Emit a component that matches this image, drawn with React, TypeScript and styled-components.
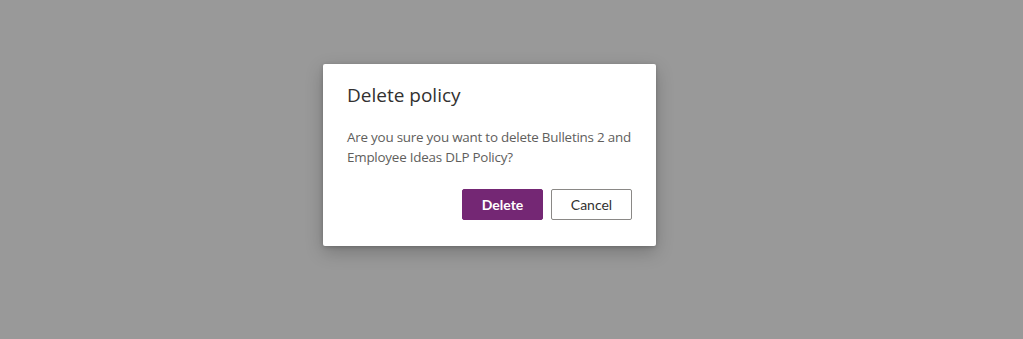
import React from "react";
import styled, { createGlobalStyle } from "styled-components";

const GlobalStyle = createGlobalStyle`
  html, body {
    margin: 0;
    padding: 0;
    height: 100%;
  }
  body {
    background: #999999;
    font-family: "Open Sans", "Noto Sans", sans-serif;
  }
  #root {
    height: 100%;
  }
`;

const Overlay = styled.div`
  height: 339px;
  display: flex;
  justify-content: flex-start;
  align-items: flex-start;
  padding: 64px 0 0 323px;
  box-sizing: border-box;
`;

const Dialog = styled.div`
  width: 333px;
  height: 182px;
  box-sizing: border-box;
  background: #ffffff;
  border-radius: 2px;
  box-shadow: 0 6px 18px rgba(0, 0, 0, 0.22), 0 1px 4px rgba(0, 0, 0, 0.18);
  padding: 18px 24px 26px;
  display: flex;
  flex-direction: column;
`;

const Title = styled.h2`
  margin: 0;
  font-family: "Open Sans", "Noto Sans", sans-serif;
  font-size: 19px;
  font-weight: 500;
  line-height: 26px;
  color: #323130;
`;

const Message = styled.p`
  margin: 19px 0 0;
  font-size: 13.4px;
  letter-spacing: -0.22px;
  line-height: 20px;
  color: #605e5c;
  white-space: nowrap;
`;

const Actions = styled.div`
  display: flex;
  justify-content: flex-end;
  gap: 8px;
  margin-top: auto;
`;

const Button = styled.button<{ $primary?: boolean }>`
  width: 81px;
  height: 31px;
  box-sizing: border-box;
  border-radius: 2px;
  font-family: "Lato", "Open Sans", sans-serif;
  font-size: 14px;
  font-weight: ${({ $primary }) => ($primary ? 700 : 400)};
  cursor: pointer;
  background: ${({ $primary }) => ($primary ? "#742774" : "#ffffff")};
  color: ${({ $primary }) => ($primary ? "#ffffff" : "#323130")};
  border: 1px solid ${({ $primary }) => ($primary ? "#742774" : "#8a8886")};
`;

export default function App() {
  return (
    <>
      <GlobalStyle />
      <Overlay>
        <Dialog role="dialog">
          <Title>Delete policy</Title>
          <Message>
            Are you sure you want to delete Bulletins 2 and
            <br />
            Employee Ideas DLP Policy?
          </Message>
          <Actions>
            <Button $primary>Delete</Button>
            <Button>Cancel</Button>
          </Actions>
        </Dialog>
      </Overlay>
    </>
  );
}
